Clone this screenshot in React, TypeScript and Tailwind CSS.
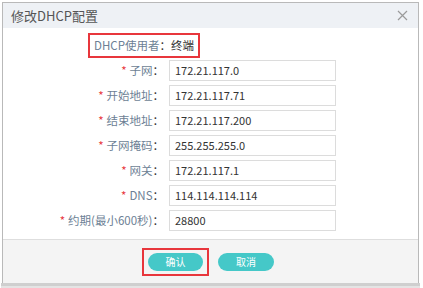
const rows = [
  { label: '子网', value: '172.21.117.0' },
  { label: '开始地址', value: '172.21.117.71' },
  { label: '结束地址', value: '172.21.117.200' },
  { label: '子网掩码', value: '255.255.255.0' },
  { label: '网关', value: '172.21.117.1' },
  { label: 'DNS', value: '114.114.114.114' },
  { label: '约期(最小600秒)', value: '28800' },
]

const App = () => {
  return (
    <div
      className="h-[288px] w-[423px] overflow-hidden bg-white pl-[2px] pt-[2px]"
      style={{ fontFamily: '"Noto Sans CJK SC", "Noto Sans", sans-serif' }}
    >
      <div className="w-[417px] border-x border-t border-[#b9b9b9]">
        <div className="flex h-[25px] items-center justify-between bg-[#eef1f5] pl-[8px] pr-[10px]">
          <span className="text-[13px] text-[#555]">修改DHCP配置</span>
          <svg width="11" height="11" viewBox="0 0 11 11">
            <path d="M1 1L10 10M10 1L1 10" stroke="#9a9a9a" strokeWidth="1.2" />
          </svg>
        </div>
        <div className="h-[211px] pt-[5px]">
          <div className="ml-[85px] flex h-[25px] w-[112px] items-center justify-center border-2 border-[#e8363c] text-[11.5px]">
            <span className="text-[#6d7f95]">DHCP使用者</span>
            <span className="text-[#333]">：终端</span>
          </div>
          <div className="mt-[2px] flex flex-col gap-[4px]">
            {rows.map((row) => (
              <div key={row.label} className="flex items-center">
                <label className="w-[163px] pr-[2px] text-right text-[11.5px] text-[#6d7f95]">
                  <span className="mr-[3px] text-[#e8363c]">*</span>
                  {row.label}
                  <span className="text-[#333]">：</span>
                </label>
                <div className="ml-[3px] flex h-[21px] w-[167px] items-center border border-[#dcdcdc] px-[5px] text-[11px] text-[#333]">
                  {row.value}
                </div>
              </div>
            ))}
          </div>
        </div>
        <div className="flex h-[44px] items-center gap-[9px] border-t border-[#dedede] bg-[#f4f4f4] pl-[139px]">
          <div className="border-2 border-[#e8363c] px-[4px] py-[3px]">
            <button className="flex h-[18px] w-[55px] items-center justify-center rounded-full bg-[#45c8c8] text-[10px] text-white">
              确认
            </button>
          </div>
          <button className="flex h-[18px] w-[56px] items-center justify-center rounded-full bg-[#45c8c8] text-[10px] text-white">
            取消
          </button>
        </div>
      </div>
      <div className="h-[3px] w-[419px] -ml-[1px] bg-[#cfcfcf]" />
      <div className="h-[3px] w-[419px] -ml-[1px] bg-[#e4e4e4]" />
    </div>
  )
}

export default App
